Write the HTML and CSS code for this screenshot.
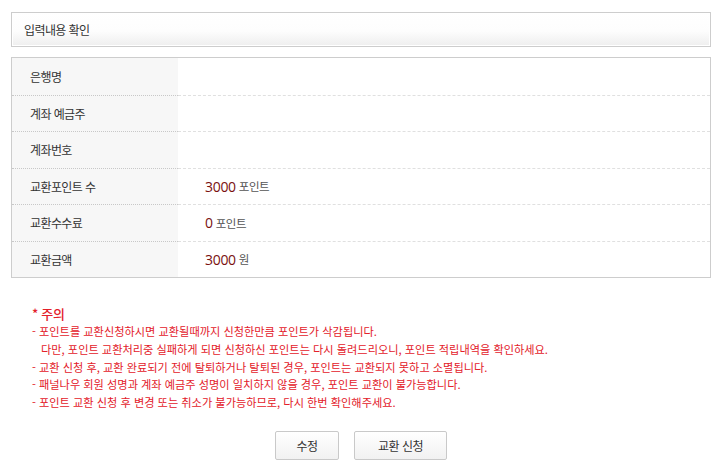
FILE: index.html
```html
<!DOCTYPE html>
<html lang="ko">
<head>
<meta charset="utf-8">
<title>입력내용 확인</title>
<link rel="stylesheet" href="styles.css">
</head>
<body>
<div class="page">
  <div class="title-box"><h2 class="title">입력내용 확인</h2></div>

  <div class="info-table">
    <div class="row"><div class="label">은행명</div><div class="value"></div></div>
    <div class="row"><div class="label">계좌 예금주</div><div class="value"></div></div>
    <div class="row"><div class="label">계좌번호</div><div class="value"></div></div>
    <div class="row"><div class="label">교환포인트 수</div><div class="value"><span class="num">3000</span> <span class="unit">포인트</span></div></div>
    <div class="row"><div class="label">교환수수료</div><div class="value"><span class="num">0</span> <span class="unit">포인트</span></div></div>
    <div class="row"><div class="label">교환금액</div><div class="value"><span class="num">3000</span> <span class="unit">원</span></div></div>
  </div>

  <div class="notice">
    <p class="notice-head">* 주의</p>
    <ul class="notice-list">
      <li>- 포인트를 교환신청하시면 교환될때까지 신청한만큼 포인트가 삭감됩니다.<br><span class="indent">다만, 포인트 교환처리중 실패하게 되면 신청하신 포인트는 다시 돌려드리오니, 포인트 적립내역을 확인하세요.</span></li>
      <li>- 교환 신청 후, 교환 완료되기 전에 탈퇴하거나 탈퇴된 경우, 포인트는 교환되지 못하고 소멸됩니다.</li>
      <li>- 패널나우 회원 성명과 계좌 예금주 성명이 일치하지 않을 경우, 포인트 교환이 불가능합니다.</li>
      <li>- 포인트 교환 신청 후 변경 또는 취소가 불가능하므로, 다시 한번 확인해주세요.</li>
    </ul>
  </div>

  <div class="buttons">
    <button class="btn btn-edit">수정</button>
    <button class="btn btn-submit">교환 신청</button>
  </div>
</div>
</body>
</html>
```

FILE: styles.css
```css
html, body {
  margin: 0;
  padding: 0;
  background: #fff;
}
body {
  font-family: "Noto Sans CJK KR", "Noto Sans", sans-serif;
  color: #333;
}
.page {
  width: 700px;
  padding: 12px 0 0 11px;
}
.title-box {
  height: 35px;
  box-sizing: border-box;
  border: 1px solid #cdcdcd;
  background: linear-gradient(#ffffff 0%, #fdfdfd 55%, #eeeeee 100%);
  box-shadow: inset 0 0 0 1px #fff;
  display: flex;
  align-items: center;
  padding-left: 12px;
}
.title {
  margin: 0;
  font-size: 12px;
  font-weight: normal;
  letter-spacing: -0.6px;
  color: #333;
}
.info-table {
  margin-top: 10px;
  border: 1px solid #cdcdcd;
}
.row {
  display: flex;
  height: 36.5px;
  box-sizing: border-box;
}
.row + .row .label {
  border-top: 1px dotted #c8c8c8;
}
.row + .row .value {
  border-top: 1px dashed #e0e0e0;
}
.label {
  width: 166px;
  flex: none;
  background: #f7f7f7;
  box-sizing: border-box;
  padding-left: 18px;
  display: flex;
  align-items: center;
  font-size: 12px;
  letter-spacing: -0.6px;
  color: #333;
}
.value {
  flex: 1;
  box-sizing: border-box;
  padding-left: 27px;
  display: flex;
  align-items: center;
  gap: 3px;
}
.num {
  font-family: "Open Sans", "Noto Sans", sans-serif;
  font-size: 14px;
  color: #7a1010;
  letter-spacing: -0.3px;
}
.unit {
  font-size: 11.5px;
  color: #555;
  letter-spacing: -0.5px;
}
.notice {
  margin-top: 28px;
  padding-left: 21px;
  color: #e3202a;
}
.notice-head {
  margin: 0 0 1px;
  font-size: 13px;
  line-height: 16px;
  font-weight: 500;
  letter-spacing: -0.3px;
}
.notice-list {
  list-style: none;
  margin: 0;
  padding: 0;
  font-size: 11.2px;
  line-height: 17.75px;
  letter-spacing: 0;
}
.indent {
  padding-left: 9px;
}
.buttons {
  margin-top: 19px;
  display: flex;
  justify-content: center;
  gap: 15px;
}
.btn {
  font-family: "Noto Sans CJK KR", "Noto Sans", sans-serif;
  font-size: 12px;
  letter-spacing: -0.5px;
  color: #333;
  height: 29px;
  border: 1px solid #c9c9c9;
  border-radius: 2px;
  background: linear-gradient(#ffffff, #f1f1f1);
  padding: 0;
  cursor: pointer;
}
.btn-edit {
  width: 64px;
}
.btn-submit {
  width: 93px;
}
```
